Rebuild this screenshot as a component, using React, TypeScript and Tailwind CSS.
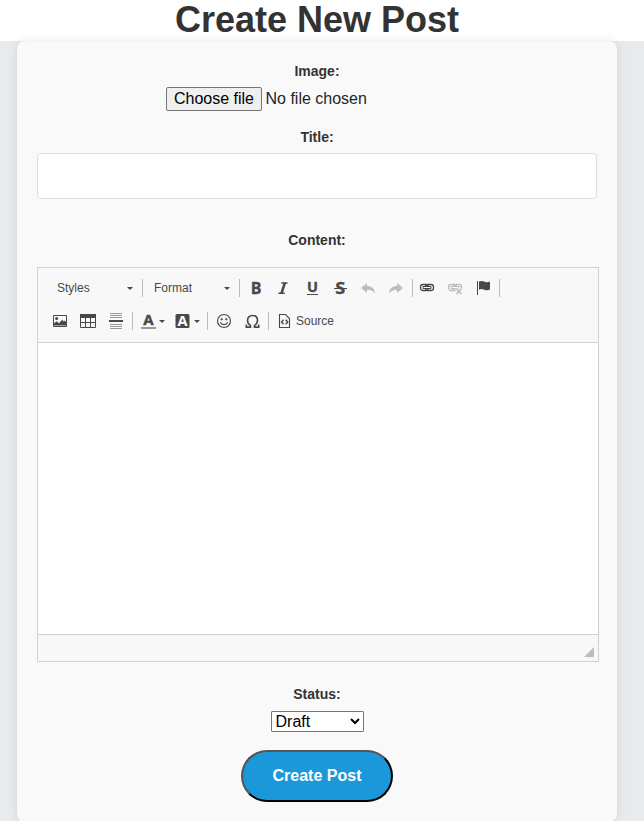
import type { ReactNode } from 'react';

function Separator({ className = '' }: { className?: string }) {
  return <span className={`h-[18px] w-px shrink-0 bg-[#bcbcbc] ${className}`} />;
}

function Caret({ className = '' }: { className?: string }) {
  return (
    <svg className={`shrink-0 ${className}`} width="6" height="3" viewBox="0 0 6 3">
      <path d="M0 0h6L3 3z" fill="#484848" />
    </svg>
  );
}

function Tool({ label, children }: { label: string; children: ReactNode }) {
  return (
    <button
      type="button"
      aria-label={label}
      className="flex h-7 w-7 shrink-0 items-center justify-center text-[#484848]"
    >
      {children}
    </button>
  );
}

function Icon({ children, className = '' }: { children: ReactNode; className?: string }) {
  return (
    <svg
      className={`shrink-0 overflow-visible ${className}`}
      width="16"
      height="16"
      viewBox="0 0 16 16"
      fill="none"
    >
      {children}
    </svg>
  );
}

const glyph = 'font-["Open_Sans",sans-serif] font-bold';

function ChainLinks() {
  return (
    <>
      <rect x="1.5" y="4.5" width="8" height="6" rx="2.5" stroke="currentColor" strokeWidth="1.3" />
      <rect x="6.5" y="4.5" width="8" height="6" rx="2.5" stroke="currentColor" strokeWidth="1.3" />
      <path d="M4 6.500h8v2H4z" fill="#f8f8f8" stroke="currentColor" strokeWidth="1" />
    </>
  );
}

function ToolbarTop() {
  return (
    <div className="flex h-[33px] items-center">
      <button type="button" className="flex w-[104px] items-center justify-between pr-[9px] pl-[19px]">
        Styles
        <Caret className="mt-px" />
      </button>
      <Separator />
      <button type="button" className="flex w-24 items-center justify-between pr-[9px] pl-[11px]">
        Format
        <Caret className="mt-px" />
      </button>
      <Separator className="mr-0.5" />
      <Tool label="Bold">
        <Icon>
          <text x="2.8" y="13.800" fontSize="16" fill="currentColor" stroke="currentColor" strokeWidth="0.3" className={glyph}>B</text>
        </Icon>
      </Tool>
      <Tool label="Italic">
        <Icon>
          <path d="M5.300 3h6.200M2.500 13.200h6.200" stroke="currentColor" strokeWidth="1.400" />
          <path d="M8.900 2.800 5.500 13.200" stroke="currentColor" strokeWidth="2.500" />
        </Icon>
      </Tool>
      <Tool label="Underline">
        <Icon>
          <text x="3" y="12.200" fontSize="14.500" fill="currentColor" stroke="currentColor" strokeWidth="0.3" className={glyph}>U</text>
          <path d="M3 14.500h11" stroke="currentColor" />
        </Icon>
      </Tool>
      <Tool label="Strikethrough">
        <Icon>
          <text
            x="3.300"
            y="13.800"
            fontSize="16"
            textLength="10"
            lengthAdjust="spacingAndGlyphs"
            fill="currentColor"
            stroke="currentColor"
            strokeWidth="0.3"
            className={glyph}
          >
            S
          </text>
          <path d="M2 8.500h13" stroke="currentColor" />
        </Icon>
      </Tool>
      <Tool label="Undo">
        <Icon className="text-[#bdbdbd]">
          <path d="M7 3v3c4.500 0 7.600 2.300 8 7.500C13 10.800 10.700 9.900 7 9.800V13L1 8z" fill="currentColor" />
        </Icon>
      </Tool>
      <Tool label="Redo">
        <Icon className="text-[#bdbdbd]">
          <path d="M9 3v3c-4.500 0-7.600 2.300-8 7.500 2-2.700 4.300-3.600 8-3.700V13l6-5z" fill="currentColor" />
        </Icon>
      </Tool>
      <Separator className="ml-0.5" />
      <Tool label="Link">
        <Icon>
          <ChainLinks />
        </Icon>
      </Tool>
      <Tool label="Unlink">
        <Icon className="text-[#bdbdbd]">
          <ChainLinks />
          <path d="M8.500 8.500H15v6H8.500z" fill="#f8f8f8" />
          <path d="m9.500 9 4.800 5m0-5-4.800 5" stroke="currentColor" strokeWidth="1.700" />
        </Icon>
      </Tool>
      <Tool label="Anchor">
        <Icon>
          <path d="M2.500 1v14" stroke="currentColor" />
          <path d="M4 1.500c1.800-.9 3.500-.7 5.200.1 1.800.8 3.800.8 5.800 0v8c-2 .9-4 .9-5.800.1C7.500 8.900 5.800 8.900 4 9.800z" fill="currentColor" />
        </Icon>
      </Tool>
      <Separator className="ml-0.5" />
    </div>
  );
}

function ToolbarBottom() {
  return (
    <div className="flex h-[33px] items-center pl-2">
      <Tool label="Image">
        <Icon>
          <path d="M1.500 2.500h13v11h-13z" stroke="currentColor" />
          <circle cx="4.600" cy="5.500" r="1.500" fill="currentColor" />
          <path d="M2 12.500v-2l2.500-2.200 2.500 2 3.200-3.600 1.500 1.700 1-.8 1.300 1.300v3.600z" fill="currentColor" />
        </Icon>
      </Tool>
      <Tool label="Table">
        <Icon>
          <path d="M0 1h16v4H0z" fill="currentColor" />
          <path d="M.5 4v10.500h15V4M5.500 5v9M10.500 5v9M1 9.500h14" stroke="currentColor" />
        </Icon>
      </Tool>
      <Tool label="Horizontal line">
        <Icon>
          <path d="M2 .5h12M2 2.500h12M2 4.500h12M2 11.500h12M2 13.500h12M2 15.500h12" stroke="#999999" />
          <path d="M1 8h14" stroke="currentColor" strokeWidth="2" />
        </Icon>
      </Tool>
      <Separator className="ml-0.5" />
      <button type="button" aria-label="Text colour" className="ml-[7px] flex items-center gap-[3px] text-[#484848]">
        <Icon>
          <text x="3.200" y="12.200" fontSize="15" fill="currentColor" stroke="currentColor" strokeWidth="0.4" className={glyph}>A</text>
          <path d="M1 15h15" stroke="#999999" strokeWidth="2" />
        </Icon>
        <Caret className="mt-px" />
      </button>
      <button type="button" aria-label="Background colour" className="ml-[10px] flex items-center gap-[3px] text-[#484848]">
        <Icon>
          <rect x="0.500" y="1" width="14" height="14" rx="1.500" fill="currentColor" />
          <text x="2.500" y="13" fontSize="14.500" fill="#ffffff" className={glyph}>A</text>
        </Icon>
        <Caret className="mt-px" />
      </button>
      <Separator className="ml-[7px]" />
      <span className="w-0.5" />
      <Tool label="Smiley">
        <Icon>
          <circle cx="8" cy="8" r="6.500" stroke="currentColor" strokeWidth="1.200" />
          <circle cx="5.700" cy="6.300" r="1.150" fill="currentColor" />
          <circle cx="10.300" cy="6.300" r="1.150" fill="currentColor" />
          <path d="M4.200 9.300c1.700 3 5.900 3 7.600 0" stroke="currentColor" strokeWidth="1.200" />
        </Icon>
      </Tool>
      <Tool label="Special character">
        <Icon>
          <path
            d="M2.300 11.500v2.600h4.200v-1.700C4.700 11.300 3.500 9.600 3.500 7.400c0-3 2-4.900 5-4.900s5 1.900 5 4.900c0 2.200-1.200 3.900-3 5v1.700h4.200v-2.600"
            stroke="currentColor"
            strokeWidth="1.600"
          />
        </Icon>
      </Tool>
      <Separator className="ml-0.5" />
      <button type="button" className="ml-[7px] flex items-center gap-1">
        <Icon className="text-[#484848]">
          <path d="M3.500 1.500h6l4 4v9h-10z" stroke="currentColor" strokeWidth="1.100" />
          <path d="M7.500 6.800 5.500 9l2 2.200M9.700 6.800l2 2.200-2 2.200" stroke="currentColor" strokeWidth="1.400" />
        </Icon>
        Source
      </button>
    </div>
  );
}

function Label({ children, className = '' }: { children: ReactNode; className?: string }) {
  return (
    <div className={`text-center text-sm leading-5 font-bold text-[#333333] ${className}`}>{children}</div>
  );
}

export default function App() {
  return (
    <div className='h-[821px] w-full overflow-hidden bg-[#e7ebee] font-["Liberation_Sans",Arial,sans-serif] text-[#212529]'>
      <header className="flex h-[41px] w-full justify-center bg-white pr-[10px]">
        <h1 className="h-[41px] text-[36px] leading-[39px] font-bold text-[#333333]">Create New Post</h1>
      </header>
      <form className="relative ml-[17px] h-[781px] w-[600px] rounded-lg bg-[#f9f9f9] px-5 pt-5 shadow-[0_0_10px_rgba(0,0,0,0.1)]">
        <Label>Image:</Label>
        <div className="mt-[6px] ml-[129px] flex h-6 items-center gap-[3.5px] text-base">
          <button
            type="button"
            className="h-6 w-24 rounded-[2px] border border-[#767676] bg-[#efefef] leading-[22px] whitespace-nowrap text-black"
          >
            Choose file
          </button>
          <span>No file chosen</span>
        </div>
        <Label className="mt-4">Title:</Label>
        <input
          type="text"
          aria-label="Title"
          className="mt-[6px] block h-[46px] w-full rounded border border-[#dddddd] bg-white px-3"
        />
        <Label className="mt-[31px]">Content:</Label>
        <section className="mt-[17px] h-[395px] w-[562px] border border-[#d1d1d1] bg-white">
          <div className="h-[75px] border-b border-[#d1d1d1] bg-[#f8f8f8] pt-[3px] text-xs text-[#484848]">
            <ToolbarTop />
            <ToolbarBottom />
          </div>
          <div className="h-[291px]" />
          <div className="flex h-[27px] items-end justify-end border-t border-[#d1d1d1] bg-[#f8f8f8] pr-1 pb-1">
            <svg width="10" height="10" viewBox="0 0 10 10">
              <path d="M10 0v10H0z" fill="#bcbcbc" />
            </svg>
          </div>
        </section>
        <Label className="mt-[22px]">Status:</Label>
        <select
          aria-label="Status"
          className="mx-auto mt-[7px] block h-[21px] w-[93px] rounded-[1px] border border-[#767676] bg-white text-base leading-[19px] text-black"
        >
          <option>Draft</option>
          <option>Published</option>
        </select>
        <button
          type="button"
          className="mx-auto mt-[18px] block h-[52px] w-[152px] rounded-full border-2 border-black [border-style:outset] bg-[#1b98d9] text-base font-bold text-white"
        >
          Create Post
        </button>
      </form>
    </div>
  );
}
